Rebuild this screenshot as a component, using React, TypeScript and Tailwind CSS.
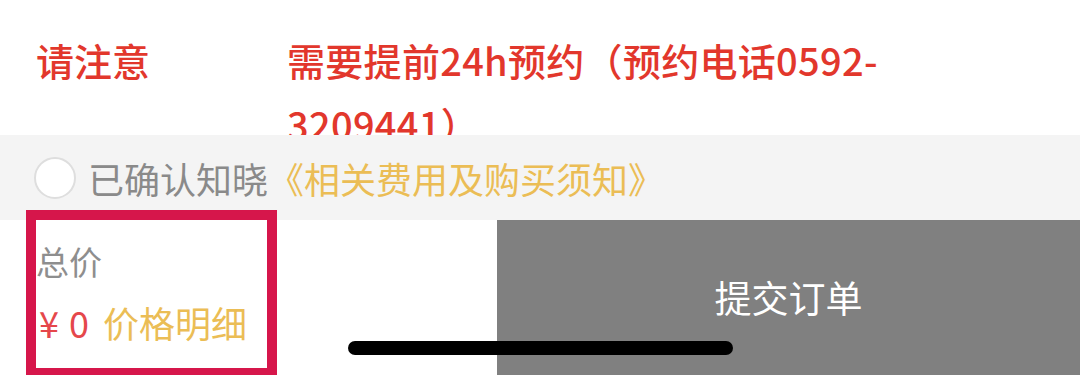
import React from 'react';

export default function App() {
  return (
    <div className="relative w-[1080px] h-[375px] overflow-hidden bg-white font-['Noto_Sans_CJK_SC',sans-serif]">
      {/* notice row */}
      <div className="flex h-[135px] overflow-hidden pl-[36px] pt-[28px] text-[38px] font-medium leading-[64px] text-[#e2372c]">
        <div className="w-[251px] shrink-0">请注意</div>
        <div className="w-[640px] tracking-[0.3px]">
          需要提前24h预约（预约电话0592-
          <br />
          3209441）
        </div>
      </div>

      {/* confirm row */}
      <div className="flex h-[85px] items-center bg-[#f4f4f4] pl-[34px] text-[36px]">
        <div className="w-[42px] h-[42px] shrink-0 rounded-full border-2 border-[#dedede] bg-white" />
        <span className="ml-[12px] text-[#8a8a8a]">已确认知晓</span>
        <span className="text-[#ebbd55]">《相关费用及购买须知》</span>
      </div>

      {/* footer bar */}
      <div className="flex h-[155px]">
        <div className="w-[497px] shrink-0 pl-[36px] pt-[21px]">
          <div className="text-[33px] leading-[40px] text-[#8e8e8e]">总价</div>
          <div className="mt-[20px] flex items-baseline text-[36px] leading-[42px]">
            <span className="ml-[3px] text-[#e5474b]">¥</span>
            <span className="ml-[10px] text-[#e5474b]">0</span>
            <span className="ml-[14px] text-[#ebbd55]">价格明细</span>
          </div>
        </div>
        <div className="flex flex-1 items-center justify-center bg-[#808080] text-[37px] text-white">
          提交订单
        </div>
      </div>

      {/* highlight box */}
      <div className="absolute left-[26px] top-[210px] w-[251px] h-[168px] border-[10px] border-[#d6164b]" />

      {/* home indicator */}
      <div className="absolute left-[348px] top-[341px] w-[385px] h-[14px] rounded-full bg-black" />
    </div>
  );
}
